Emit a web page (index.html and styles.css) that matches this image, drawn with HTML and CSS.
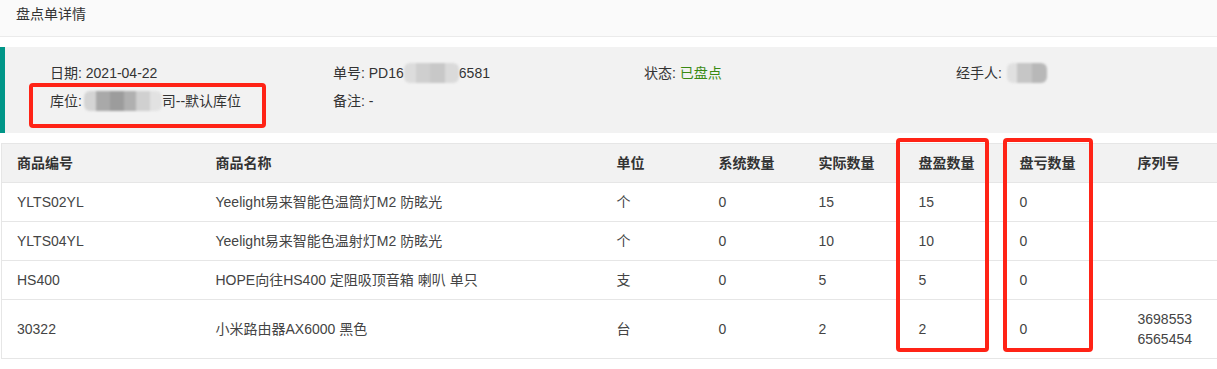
FILE: index.html
```html
<!DOCTYPE html>
<html lang="zh">
<head>
<meta charset="utf-8">
<title>盘点单详情</title>
<link rel="stylesheet" href="styles.css">
</head>
<body>
<div class="page">
  <div class="page-header">盘点单详情</div>

  <div class="quote">
    <div class="info-grid">
      <div class="info-item">日期: 2021-04-22</div>
      <div class="info-item">单号: PD16<span class="mask mask-no"><i></i><i></i><i></i><i></i></span>6581</div>
      <div class="info-item">状态: <span class="ok">已盘点</span></div>
      <div class="info-item">经手人: <span class="mask mask-user"><i></i><i></i><i></i></span></div>
      <div class="info-item">库位: <span class="mask mask-loc"><i></i><i></i><i></i><i></i><i></i><i></i></span>司--默认库位</div>
      <div class="info-item">备注: -</div>
    </div>
  </div>

  <div class="table-wrap">
    <table class="grid">
      <colgroup>
        <col class="c1"><col class="c2"><col class="c3"><col class="c4"><col class="c5"><col class="c6"><col class="c7"><col class="c8">
      </colgroup>
      <thead>
        <tr><th>商品编号</th><th>商品名称</th><th>单位</th><th>系统数量</th><th>实际数量</th><th>盘盈数量</th><th>盘亏数量</th><th>序列号</th></tr>
      </thead>
      <tbody>
        <tr><td>YLTS02YL</td><td>Yeelight易来智能色温筒灯M2 防眩光</td><td>个</td><td>0</td><td>15</td><td>15</td><td>0</td><td></td></tr>
        <tr><td>YLTS04YL</td><td>Yeelight易来智能色温射灯M2 防眩光</td><td>个</td><td>0</td><td>10</td><td>10</td><td>0</td><td></td></tr>
        <tr><td>HS400</td><td>HOPE向往HS400 定阻吸顶音箱 喇叭 单只</td><td>支</td><td>0</td><td>5</td><td>5</td><td>0</td><td></td></tr>
        <tr><td>30322</td><td>小米路由器AX6000 黑色</td><td>台</td><td>0</td><td>2</td><td>2</td><td>0</td><td>3698553<br>6565454</td></tr>
      </tbody>
    </table>
  </div>

  <div class="mark mark-loc"></div>
  <div class="mark mark-gain"></div>
  <div class="mark mark-loss"></div>
</div>
</body>
</html>
```

FILE: styles.css
```css
html, body {
  margin: 0;
  padding: 0;
  background: #fff;
}
body {
  font-family: "Liberation Sans", Arial, "Noto Sans CJK SC", sans-serif;
  font-size: 14px;
  color: #333;
  overflow: hidden;
}
.page {
  position: relative;
  width: 1217px;
  height: 369px;
  overflow: hidden;
}
.page-header {
  height: 36px;
  line-height: 28px;
  padding-left: 16px;
  background: #fafafa;
  border-bottom: 1px solid #ebebeb;
  color: #333;
}
.quote {
  margin-top: 10px;
  height: 86px;
  box-sizing: border-box;
  padding: 12px 0 0 45px;
  background: #f2f2f2;
  border-left: 5px solid #009688;
}
.info-grid {
  display: grid;
  grid-template-columns: 283px 311px 312px 1fr;
  grid-auto-rows: 28px;
  line-height: 28px;
}
.info-item {
  white-space: nowrap;
  color: #333;
}
.ok {
  color: #3a8a12;
}
.mask {
  display: inline-flex;
  vertical-align: middle;
  height: 20px;
  margin-top: -3px;
  filter: blur(1.2px);
  border-radius: 6px;
  overflow: hidden;
}
.mask i {
  display: block;
  flex: none;
  height: 20px;
}
.mask-no { width: 55px; }
.mask-no i:nth-child(1) { width: 12px; background: #dcdcdc; }
.mask-no i:nth-child(2) { width: 14px; background: #cfcfcf; }
.mask-no i:nth-child(3) { width: 15px; background: #c8c8c8; }
.mask-no i:nth-child(4) { width: 14px; background: #dadada; }
.mask-user { width: 40px; margin-left: 1px; }
.mask-user i:nth-child(1) { width: 10px; background: #e0e0e0; }
.mask-user i:nth-child(2) { width: 15px; background: #c6c6c6; }
.mask-user i:nth-child(3) { width: 15px; background: #b8b8b8; }
.mask-loc { width: 78px; margin-left: -2px; }
.mask-loc i:nth-child(1) { width: 12px; background: #d4d4d4; }
.mask-loc i:nth-child(2) { width: 14px; background: #a9a9a9; }
.mask-loc i:nth-child(3) { width: 14px; background: #9c9c9c; }
.mask-loc i:nth-child(4) { width: 12px; background: #b0b0b0; }
.mask-loc i:nth-child(5) { width: 14px; background: #d0d0d0; }
.mask-loc i:nth-child(6) { width: 12px; background: #e2e2e2; }

.table-wrap {
  margin-top: 10px;
  margin-left: 1px;
}
.grid {
  border-collapse: collapse;
  table-layout: fixed;
  width: 1400px;
  border-left: 1px solid #e6e6e6;
  border-top: 1px solid #e6e6e6;
}
.c1 { width: 199px; }
.c2 { width: 401px; }
.c3 { width: 102px; }
.c4 { width: 100px; }
.c5 { width: 100px; }
.c6 { width: 101px; }
.c7 { width: 118px; }
.c8 { width: 279px; }
.grid th,
.grid td {
  padding: 9px 15px;
  line-height: 20px;
  text-align: left;
  border-bottom: 1px solid #e6e6e6;
  white-space: nowrap;
  vertical-align: middle;
}
.grid th {
  background: #f2f2f2;
  font-weight: bold;
  color: #333;
}
.grid td {
  color: #444;
}

.mark {
  position: absolute;
  box-sizing: border-box;
  border: 4px solid #ff2316;
  border-radius: 4px;
}
.mark-loc {
  left: 29px;
  top: 83px;
  width: 237px;
  height: 45px;
}
.mark-gain {
  left: 896px;
  top: 138px;
  width: 93px;
  height: 214px;
}
.mark-loss {
  left: 1003px;
  top: 138px;
  width: 90px;
  height: 214px;
}
```
